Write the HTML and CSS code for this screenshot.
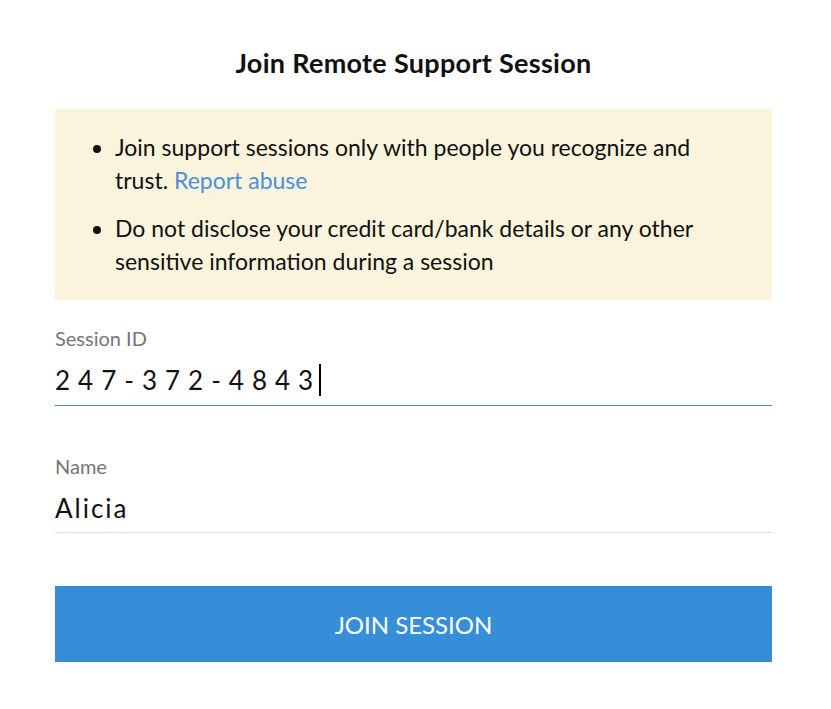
FILE: index.html
```html
<!DOCTYPE html>
<html>
<head>
<meta charset="utf-8">
<link rel="stylesheet" href="styles.css">
</head>
<body>
<div class="page">
  <h1 class="title">Join Remote Support Session</h1>
  <div class="notice">
    <ul class="notice-list">
      <li>Join support sessions only with people you recognize and trust. <a class="link" href="#">Report abuse</a></li>
      <li>Do not disclose your credit card/bank details or any other sensitive information during a session</li>
    </ul>
  </div>
  <div class="field field-active">
    <div class="label">Session ID</div>
    <div class="value value-id">247-372-4843<span class="caret"></span></div>
  </div>
  <div class="field field-name">
    <div class="label">Name</div>
    <div class="value">Alicia</div>
  </div>
  <button class="join">JOIN SESSION</button>
</div>
</body>
</html>
```
FILE: styles.css
```css
html, body {
  margin: 0;
  padding: 0;
  background: #ffffff;
}
body {
  font-family: Lato, "Liberation Sans", sans-serif;
  color: #111111;
}
.page {
  width: 717px;
  padding: 0 59px 0 55px;
  display: flex;
  flex-direction: column;
}
.title {
  margin: 46px 0 0 0;
  font-size: 27px;
  font-weight: 700;
  line-height: 34px;
  letter-spacing: 0.3px;
  text-align: center;
  color: #111;
}
.notice {
  margin-top: 29px;
  background: #faf4dc;
  padding: 22px 70px 22px 0;
}
.notice-list {
  margin: 0;
  padding-left: 60px;
  font-size: 23px;
  line-height: 33px;
}
.notice-list li + li {
  margin-top: 15px;
}
.link {
  color: #4a8fd8;
  text-decoration: none;
}
.field {
  margin-top: 26px;
  border-bottom: 1px solid #dddddd;
  padding-bottom: 8px;
}
.field-active {
  border-bottom-color: #3b8edb;
  padding-bottom: 9px;
}
.field-name {
  margin-top: 48px;
}
.label {
  font-size: 20px;
  line-height: 24px;
  color: #767676;
}
.value {
  margin-top: 14px;
  font-size: 26px;
  line-height: 32px;
  letter-spacing: 2px;
  color: #111;
  display: flex;
  align-items: center;
}
.value-id {
  letter-spacing: 8px;
}
.caret {
  display: inline-block;
  width: 2px;
  height: 32px;
  background: #000;
  margin-left: -2px;
}
.join {
  margin-top: 53px;
  height: 76px;
  border: none;
  background: #378ed8;
  color: #ffffff;
  font-family: Lato, "Liberation Sans", sans-serif;
  font-size: 24px;
  cursor: pointer;
}
```
